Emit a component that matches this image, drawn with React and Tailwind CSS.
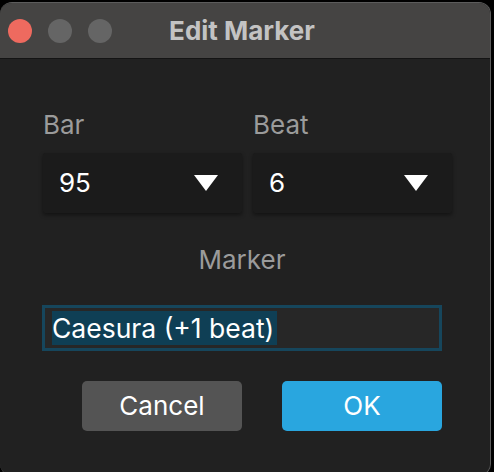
const font = { fontFamily: "Inter, 'Noto Sans', sans-serif" };

function Caret() {
  return (
    <svg width="24" height="16" viewBox="0 0 24 16" className="shrink-0">
      <path d="M0 0H24L12 16Z" fill="#ffffff" />
    </svg>
  );
}

function Select({ label, value }) {
  return (
    <div className="flex flex-col">
      <div className="h-[26px] text-[26px] leading-[26px] text-[#9b9b9b]">{label}</div>
      <div className="mt-[15px] flex h-[60px] items-center justify-between rounded-[2px] bg-[#1b1b1b] pl-[16px] pr-[24px] shadow-[0_2px_4px_rgba(0,0,0,0.45)]">
        <span className="text-[26px] leading-[26px] text-white">{value}</span>
        <Caret />
      </div>
    </div>
  );
}

export default function App() {
  return (
    <div className="h-[472px] w-[494px] overflow-hidden bg-black pt-[2px]" style={font}>
      <div className="flex h-[474px] w-[491px] flex-col overflow-hidden rounded-[12px] border border-[#5c5c5c] border-l-0 bg-[#212121]">
        <div className="relative flex h-[56px] shrink-0 items-center border-b border-[#141414] bg-[#454443] pl-[8px]">
          <div className="flex gap-[16px]">
            <span className="h-[24px] w-[24px] rounded-full bg-[#ee6a5f]" />
            <span className="h-[24px] w-[24px] rounded-full bg-[#656565]" />
            <span className="h-[24px] w-[24px] rounded-full bg-[#656565]" />
          </div>
          <div className="absolute inset-0 flex items-center justify-center pr-[6px] text-[26px] font-bold leading-[26px] text-[#c3c3c3]">
            Edit Marker
          </div>
        </div>

        <div className="ml-[43px] mt-[53px] grid w-[409px] grid-cols-2 gap-x-[11px]">
          <Select label="Bar" value="95" />
          <Select label="Beat" value="6" />
        </div>

        <div className="ml-[42px] mt-[34px] w-[400px] text-center text-[26px] leading-[26px] text-[#9b9b9b]">
          Marker
        </div>

        <div className="ml-[42px] mt-[32px] flex h-[46px] w-[400px] items-center border-[3px] border-[#16465c] bg-[#272727] pl-[7px]">
          <span className="inline-block h-[34px] bg-[#0f3f55] pr-[3px] text-[26.5px] leading-[34px] text-white">
            Caesura (+1 beat)
          </span>
        </div>

        <div className="ml-[82px] mt-[30px] flex gap-[40px]">
          <button className="h-[50px] w-[160px] rounded-[5px] bg-[#545454] text-[26px] leading-[26px] text-white">
            Cancel
          </button>
          <button className="h-[50px] w-[160px] rounded-[5px] bg-[#29a6df] text-[26px] leading-[26px] text-white">
            OK
          </button>
        </div>
      </div>
    </div>
  );
}
